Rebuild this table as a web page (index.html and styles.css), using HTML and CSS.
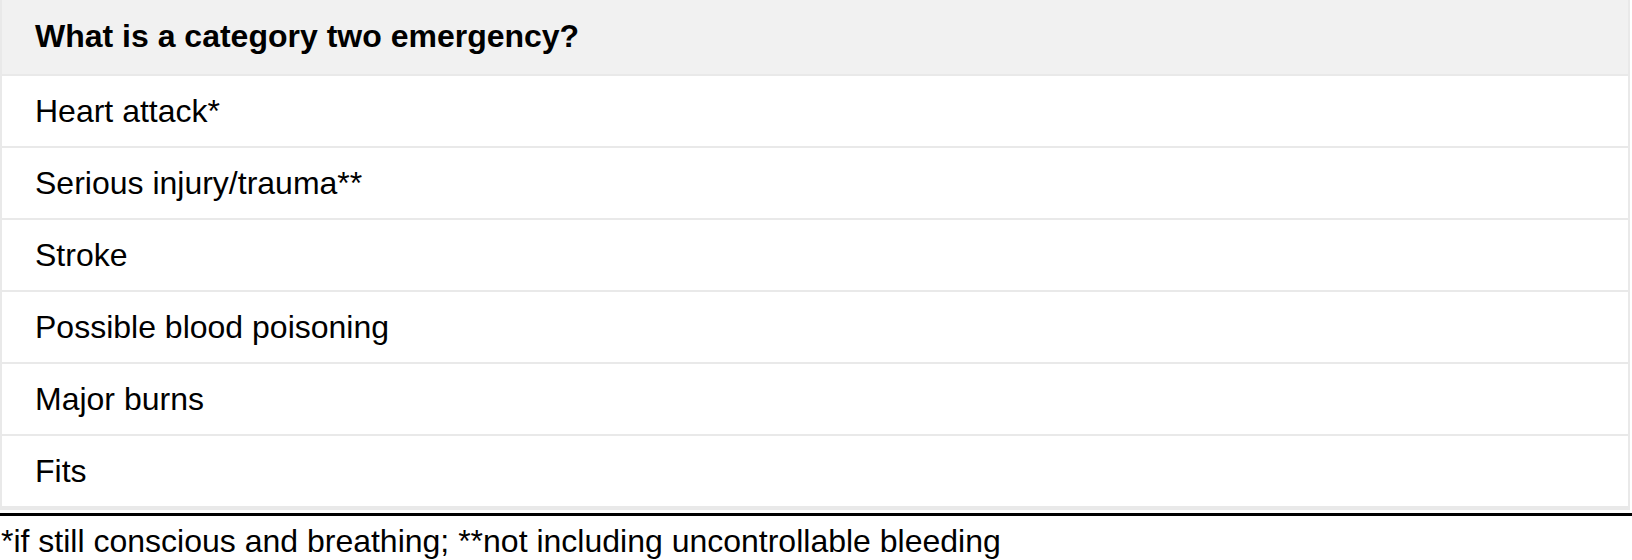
FILE: index.html
```html
<!DOCTYPE html>
<html>
<head>
<meta charset="utf-8">
<link rel="stylesheet" href="styles.css">
</head>
<body>
<div class="figure">
  <div class="table">
    <div class="row head">What is a category two emergency?</div>
    <div class="row">Heart attack*</div>
    <div class="row">Serious injury/trauma**</div>
    <div class="row">Stroke</div>
    <div class="row">Possible blood poisoning</div>
    <div class="row">Major burns</div>
    <div class="row">Fits</div>
  </div>
  <div class="rule"></div>
  <p class="note">*if still conscious and breathing; **not including uncontrollable bleeding</p>
</div>
</body>
</html>
```

FILE: styles.css
```css
html, body {
  margin: 0;
  padding: 0;
  background: #fff;
}
body {
  font-family: "Liberation Sans", Arial, sans-serif;
  color: #000;
}
.figure {
  width: 1632px;
  display: flex;
  flex-direction: column;
}
.table {
  width: 1630px;
  border: 2px solid #e9e9e9;
  border-top: none;
  box-sizing: border-box;
  display: flex;
  flex-direction: column;
}
.row {
  height: 72px;
  box-sizing: border-box;
  border-bottom: 2px solid #e9e9e9;
  padding-left: 33px;
  display: flex;
  align-items: center;
  font-size: 32px;
}
.head {
  height: 76px;
  background: #f1f1f1;
  font-weight: bold;
  padding-bottom: 2px;
}
.rule {
  margin-top: 3px;
  height: 3px;
  background: #000;
}
.note {
  margin: 7px 0 0 1px;
  font-size: 32px;
  line-height: 36px;
}
```
